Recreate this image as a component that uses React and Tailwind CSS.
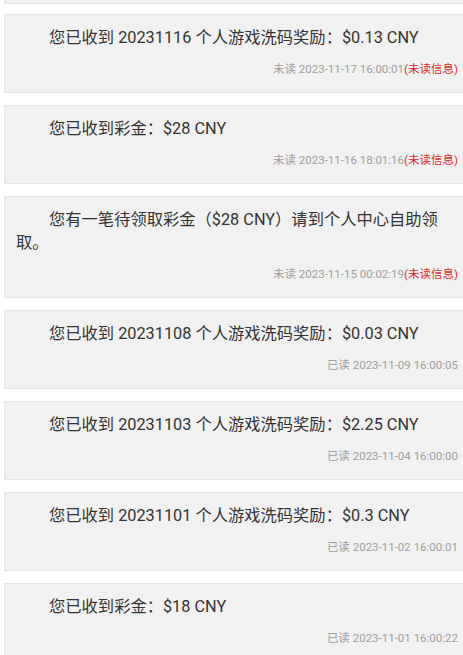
import React from "react";

const items = [
  { text: "您已收到 20231116 个人游戏洗码奖励：$0.13 CNY", status: "未读", time: "2023-11-17 16:00:01", unread: true },
  { text: "您已收到彩金：$28 CNY", status: "未读", time: "2023-11-16 18:01:16", unread: true },
  { text: "您有一笔待领取彩金（$28 CNY）请到个人中心自助领取。", status: "未读", time: "2023-11-15 00:02:19", unread: true },
  { text: "您已收到 20231108 个人游戏洗码奖励：$0.03 CNY", status: "已读", time: "2023-11-09 16:00:05" },
  { text: "您已收到 20231103 个人游戏洗码奖励：$2.25 CNY", status: "已读", time: "2023-11-04 16:00:00" },
  { text: "您已收到 20231101 个人游戏洗码奖励：$0.3 CNY", status: "已读", time: "2023-11-02 16:00:01" },
  { text: "您已收到彩金：$18 CNY", status: "已读", time: "2023-11-01 16:00:22" },
];

export default function App() {
  return (
    <div
      className="w-[463px] h-[655px] overflow-hidden bg-white"
      style={{ fontFamily: 'Roboto, "Noto Sans CJK SC", sans-serif' }}
    >
      <div className="ml-[4px] mr-[-6px] h-[4px] bg-[#f1f1f1] border border-t-0 border-[#e4e4e4]" />
      <div className="flex flex-col gap-[12px] mt-[10px]">
        {items.map((it, i) => (
          <div
            key={i}
            className="ml-[4px] mr-[-6px] bg-[#f1f1f1] border border-[#e4e4e4] pl-[11px] pr-[10px] pt-[11px] pb-[14px]"
          >
            <p className="text-[16.3px] leading-[23px] text-[#333] indent-[33px] pr-[10px]">{it.text}</p>
            <div className="mt-[12px] text-right text-[11.5px] leading-[17px] text-[#a0a0a0] whitespace-nowrap">
              {it.status} {it.time}
              {it.unread && <span className="text-[#e02a2a]">(未读信息)</span>}
            </div>
          </div>
        ))}
      </div>
    </div>
  );
}
